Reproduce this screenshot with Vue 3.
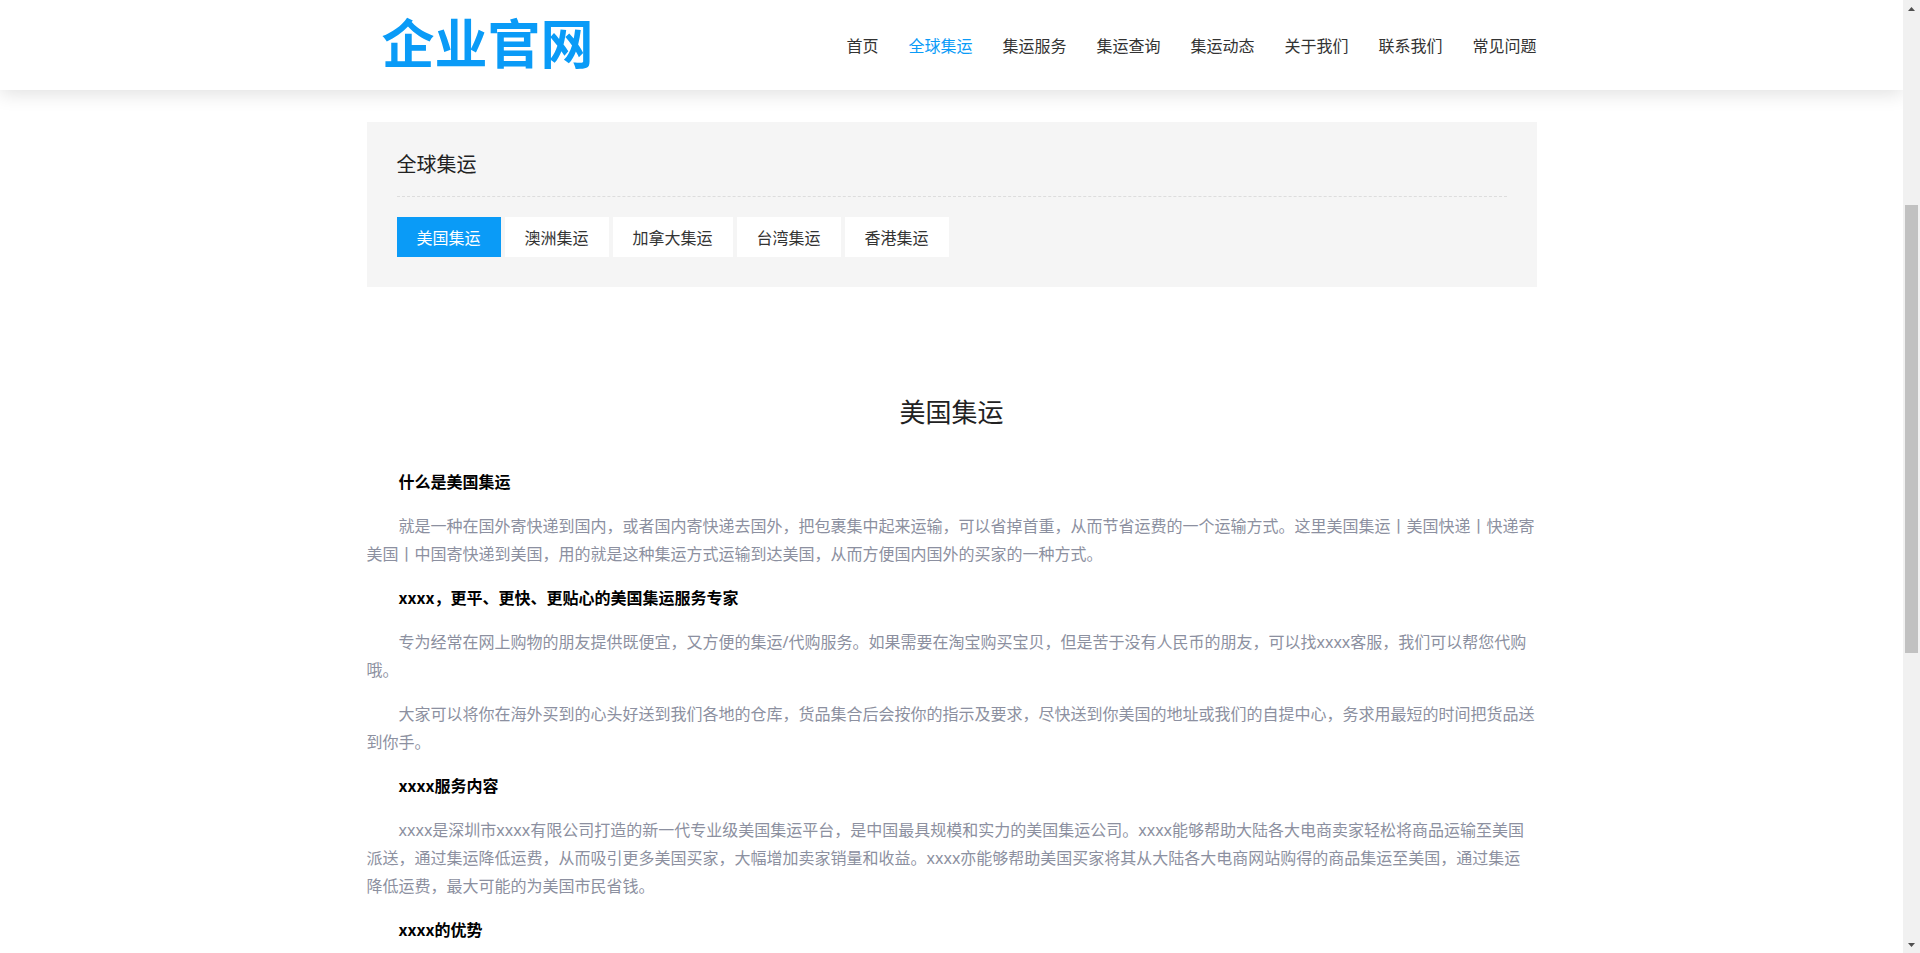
<template>
  <div class="window">
    <div class="page">
      <header class="header">
        <div class="container header-inner">
          <div class="logo">企业官网</div>
          <nav class="nav">
            <a v-for="item in navItems" :key="item" :class="{ active: item === '全球集运' }">{{ item }}</a>
          </nav>
        </div>
      </header>

      <main class="container">
        <section class="panel">
          <h2 class="panel-title">全球集运</h2>
          <div class="tabs">
            <a v-for="tab in tabs" :key="tab" class="tab" :class="{ current: tab === '美国集运' }">{{ tab }}</a>
          </div>
        </section>

        <article class="article">
          <h1>美国集运</h1>
          <p v-for="(para, i) in paragraphs" :key="i" :class="{ strong: para.strong }">{{ para.text }}</p>
        </article>
      </main>
    </div>

    <aside class="scrollbar">
      <div class="arrow-box"><svg width="7" height="4" viewBox="0 0 7 4"><path d="M3.5 0L7 4H0z" fill="#505050" /></svg></div>
      <div class="track"><div class="thumb"></div></div>
      <div class="arrow-box"><svg width="7" height="4" viewBox="0 0 7 4"><path d="M0 0H7L3.5 4z" fill="#505050" /></svg></div>
    </aside>
  </div>
</template>

<script setup>
const navItems = ["首页", "全球集运", "集运服务", "集运查询", "集运动态", "关于我们", "联系我们", "常见问题"];

const tabs = ["美国集运", "澳洲集运", "加拿大集运", "台湾集运", "香港集运"];

const paragraphs = [
  { strong: true, text: "什么是美国集运" },
  { text: "就是一种在国外寄快递到国内，或者国内寄快递去国外，把包裹集中起来运输，可以省掉首重，从而节省运费的一个运输方式。这里美国集运丨美国快递丨快递寄美国丨中国寄快递到美国，用的就是这种集运方式运输到达美国，从而方便国内国外的买家的一种方式。" },
  { strong: true, text: "xxxx，更平、更快、更贴心的美国集运服务专家" },
  { text: "专为经常在网上购物的朋友提供既便宜，又方便的集运/代购服务。如果需要在淘宝购买宝贝，但是苦于没有人民币的朋友，可以找xxxx客服，我们可以帮您代购哦。" },
  { text: "大家可以将你在海外买到的心头好送到我们各地的仓库，货品集合后会按你的指示及要求，尽快送到你美国的地址或我们的自提中心，务求用最短的时间把货品送到你手。" },
  { strong: true, text: "xxxx服务内容" },
  { text: "xxxx是深圳市xxxx有限公司打造的新一代专业级美国集运平台，是中国最具规模和实力的美国集运公司。xxxx能够帮助大陆各大电商卖家轻松将商品运输至美国派送，通过集运降低运费，从而吸引更多美国买家，大幅增加卖家销量和收益。xxxx亦能够帮助美国买家将其从大陆各大电商网站购得的商品集运至美国，通过集运降低运费，最大可能的为美国市民省钱。" },
  { strong: true, text: "xxxx的优势" },
];
</script>

<style scoped>
.window {
  display: flex;
  height: 100vh;
  overflow: hidden;
  background: #fff;
  font-family: "Noto Sans CJK SC", sans-serif;
  font-size: 16px;
  color: #333;
}

.page {
  flex: 1;
  min-width: 0;
  overflow: hidden;
}

.container {
  width: 1170px;
  margin: 0 auto;
}

.header {
  height: 90px;
  background: #fff;
  box-shadow: 0 4px 18px rgba(0, 0, 0, 0.12);
}

.header-inner {
  display: flex;
  justify-content: space-between;
  align-items: center;
  height: 100%;
}

.logo {
  margin: 0 0 7px 15px;
  font-size: 53px;
  font-weight: 700;
  line-height: 83px;
  color: #0a9bf7;
}

.nav {
  display: flex;
  gap: 30px;
}

.nav a {
  color: #333;
}

.nav a.active {
  color: #0a9bf7;
}

.panel {
  margin-top: 32px;
  padding: 0 30px 30px;
  background: #f5f5f5;
}

.panel-title {
  margin: 0;
  height: 74px;
  border-bottom: 1px dashed #ddd;
  font-size: 20px;
  font-weight: 400;
  line-height: 84px;
  color: #222;
}

.tabs {
  display: flex;
  gap: 4px;
  margin-top: 20px;
}

.tab {
  padding: 0 20px;
  line-height: 40px;
  background: #fff;
  color: #333;
}

.tab.current {
  background: #0a9bf7;
  color: #fff;
}

.article h1 {
  margin: 104px 0 36px;
  font-size: 26px;
  font-weight: 400;
  line-height: 40px;
  text-align: center;
  color: #222;
}

.article p {
  margin: 0 0 15px;
  padding: 1px 1px 0 0;
  font-family: "Noto Sans", "Noto Sans CJK SC", sans-serif;
  line-height: 28px;
  text-indent: 2em;
  color: #8c90a0;
}

.article p.strong {
  margin-bottom: 16px;
  padding: 0;
  font-family: "Noto Sans CJK SC", sans-serif;
  font-weight: 700;
  color: #000;
}

.scrollbar {
  display: flex;
  flex-direction: column;
  flex: none;
  width: 17px;
  background: #f1f1f1;
}

.arrow-box {
  display: flex;
  flex: none;
  justify-content: center;
  align-items: center;
  height: 17px;
}

.track {
  flex: 1;
  padding: 188px 2px 0;
}

.thumb {
  height: 448px;
  background: #c1c1c1;
}
</style>
